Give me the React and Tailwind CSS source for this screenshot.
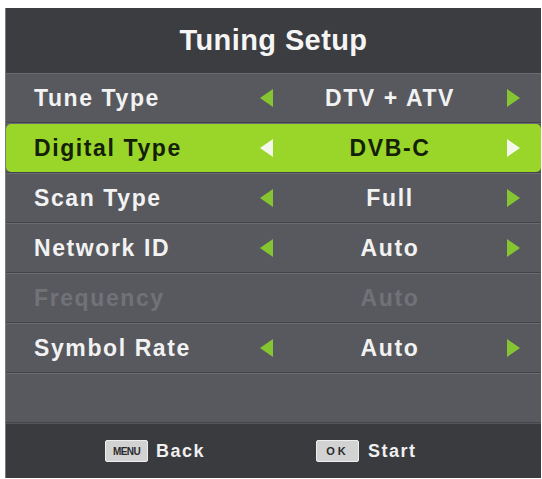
import React from 'react';

const font = { fontFamily: '"Liberation Sans", Arial, sans-serif' };

const rows = [
  { label: 'Tune Type', value: 'DTV + ATV' },
  { label: 'Digital Type', value: 'DVB-C', active: true },
  { label: 'Scan Type', value: 'Full' },
  { label: 'Network ID', value: 'Auto' },
  { label: 'Frequency', value: 'Auto', disabled: true },
  { label: 'Symbol Rate', value: 'Auto' },
];

// little triangle arrows on both sides of the value
const Arrow = ({ dir, color }) => (
  <svg width="15" height="20" viewBox="0 0 15 20" className="block">
    {dir === 'left' ? (
      <polygon points="14,1 14,19 1,10" fill={color} />
    ) : (
      <polygon points="1,1 1,19 14,10" fill={color} />
    )}
  </svg>
);

const Row = ({ label, value, active, disabled }) => {
  const textColor = active
    ? 'text-[#142008]'
    : disabled
    ? 'text-[#717277]'
    : 'text-[#f2f2f2]';
  const arrowColor = active ? '#f4f8ec' : '#86c532';

  return (
    <div className="h-[50px] border-t border-t-[#6a6b70] border-b border-b-[#44454a] flex items-center">
      <div
        className={`w-full h-full grid grid-cols-[252px_17px_1fr_17px_19px] items-center ${
          active ? 'bg-[#9ad52a] rounded-[5px] h-[46px]' : ''
        }`}
      >
        <div className={`pl-[28px] text-[23px] font-bold tracking-[1.6px] ${textColor}`}>{label}</div>
        <div className="flex justify-center">{!disabled && <Arrow dir="left" color={arrowColor} />}</div>
        <div className={`text-center text-[23px] font-bold tracking-[1.6px] ${textColor}`}>{value}</div>
        <div className="flex justify-center">{!disabled && <Arrow dir="right" color={arrowColor} />}</div>
        <div />
      </div>
    </div>
  );
};

const Key = ({ children, wide }) => (
  <span
    className={`inline-flex items-center justify-center w-[43px] h-[22px] bg-[#d2d2d2] border border-[#eeeeee] rounded-[2px] text-[#2a2a2a] font-bold ${
      wide ? 'text-[10px] tracking-[-0.6px]' : 'text-[11px] tracking-[3px]'
    }`}
  >
    {children}
  </span>
);

export default function App() {
  return (
    <div className="w-[542px] h-[479px] bg-white pt-[8px] pl-[5px]" style={font}>
      <div className="w-[536px] h-[470px] bg-[#58595e] flex flex-col border-l border-l-[#7a7b7f]">
        {/* Title */}
        <div className="h-[65px] bg-[#3c3d41] flex items-center justify-center">
          <h1 className="text-[29px] font-bold text-[#f5f5f5] tracking-[0.4px]">Tuning Setup</h1>
        </div>

        {/* Options */}
        {rows.map(r => (
          <Row key={r.label} {...r} />
        ))}
        <div className="h-[50px] border-t border-t-[#6a6b70] border-b border-b-[#44454a]" />

        {/* Footer */}
        <div className="flex-1 bg-[#3a3b3f] border-t border-t-[#55565a] flex items-center">
          <div className="flex items-center ml-[99px]">
            <Key wide>MENU</Key>
            <span className="ml-[8px] text-[18px] font-bold tracking-[1.5px] text-[#f0f0f0]">Back</span>
          </div>
          <div className="flex items-center ml-[111px]">
            <Key>OK</Key>
            <span className="ml-[9px] text-[18px] font-bold tracking-[1.5px] text-[#f0f0f0]">Start</span>
          </div>
        </div>
      </div>
    </div>
  );
}
